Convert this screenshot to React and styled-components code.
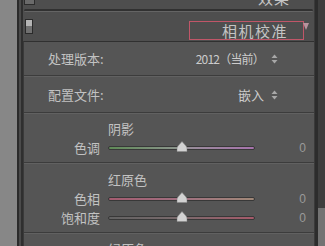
import React from "react";
import styled, { createGlobalStyle } from "styled-components";

const Global = createGlobalStyle`
  html, body { margin: 0; padding: 0; background: #545454; overflow: hidden; }
  body { font-family: "Noto Sans CJK SC", "Noto Sans", sans-serif; }
`;

const Page = styled.div`
  display: flex;
  width: 325px;
  height: 246px;
  overflow: hidden;
`;

const SideStrip = styled.div`
  width: 17px;
  flex: 0 0 17px;
  background: #878787;
`;

const Gutter = styled.div`
  width: 6px;
  flex: 0 0 6px;
  background: linear-gradient(to right, #2b2b2b 0 2px, #4b4b4b 2px 4px, #2f2f2f 4px 6px);
`;

const Column = styled.div`
  flex: 1;
  display: flex;
  flex-direction: column;
  background: #4e4e4e;
  min-width: 0;
`;

const PrevHeader = styled.div`
  height: 9px;
  flex: 0 0 9px;
  overflow: hidden;
  display: flex;
  align-items: flex-start;
  justify-content: space-between;
  padding: 0 24px 0 1px;
`;

const PrevToggle = styled.div`
  width: 9px;
  height: 14px;
  margin-top: -11px;
  border: 1px solid #2c2c2c;
  background: #6a6a6a;
`;

const PrevTitle = styled.div`
  font-size: 15px;
  line-height: 15px;
  letter-spacing: 1px;
  color: #c4c4c4;
  margin-top: -10px;
`;

const Groove = styled.div`
  height: 2px;
  flex: 0 0 2px;
  margin: 0 1px;
  border-radius: 2px;
  background: #313131;
  border-bottom: 1px solid #646464;
`;

const Header = styled.div`
  height: 29px;
  flex: 0 0 29px;
  display: flex;
  align-items: flex-start;
  justify-content: space-between;
  padding: 0 5px 0 2px;
  background: #4e4e4e;
`;

const Toggle = styled.div`
  width: 6px;
  height: 13px;
  margin-top: 7px;
  border: 1px solid #2a2a2a;
  background: linear-gradient(to bottom, #b4b4b4 0 50%, #707070 50% 100%);
`;

const TitleGroup = styled.div`
  display: flex;
  align-items: flex-start;
`;

const TitleBox = styled.div`
  width: 98px;
  height: 17px;
  margin-top: 9px;
  border: 1px solid #c05668;
  display: flex;
  align-items: center;
  justify-content: flex-end;
  padding-right: 15px;
  box-sizing: content-box;
  font-size: 15px;
  letter-spacing: 1.5px;
  color: #c4c4c4;
  line-height: 17px;
  white-space: nowrap;
`;

const Triangle = styled.div`
  width: 0;
  height: 0;
  margin-top: 11px;
  margin-left: -1px;
  border-left: 3.5px solid transparent;
  border-right: 3.5px solid transparent;
  border-top: 7px solid #b8949e;
`;

const Panel = styled.div`
  flex: 1;
  display: flex;
  flex-direction: column;
  background: #555555;
  border-top: 1px solid #303030;
  border-left: 1px solid #3a3a3a;
`;

const Section = styled.div`
  border-bottom: 1px solid #3c3c3c;
  box-shadow: 0 1px 0 #616161;
  margin-bottom: 1px;
  padding: ${(p) => p.$pad || "0"};
`;

const SelectRow = styled.div`
  height: ${(p) => p.$h}px;
  display: flex;
  align-items: center;
  justify-content: space-between;
  padding: 0 36px 0 24px;
  color: #c2c2c2;
  font-size: 13px;
`;

const Value = styled.div`
  display: flex;
  align-items: center;
  gap: 7px;
  font-size: 12px;
  letter-spacing: ${(p) => p.$ls || "0"};
  color: #cccccc;
`;

const GroupTitle = styled.div`
  height: 18px;
  line-height: 18px;
  padding-left: 84px;
  font-size: 13px;
  color: #c2c2c2;
`;

const SliderRow = styled.div`
  height: 19px;
  display: grid;
  grid-template-columns: 76px 147px 43px;
  column-gap: 8px;
  align-items: center;
`;

const SliderLabel = styled.div`
  text-align: right;
  font-size: 13px;
  color: #c2c2c2;
  line-height: 19px;
`;

const Track = styled.div`
  position: relative;
  height: 4px;
  border-radius: 2px;
  border: 1px solid #383838;
  box-sizing: border-box;
  background: ${(p) => p.$bg};
`;

const Thumb = styled.svg`
  position: absolute;
  top: -6px;
  width: 11px;
  height: 11px;
  transform: translateX(-50%);
`;

const SliderValue = styled.div`
  text-align: right;
  font-family: "Liberation Sans", Arial, sans-serif;
  font-size: 12px;
  color: #9a9a9a;
`;

const RightEdge = styled.div`
  width: 4px;
  flex: 0 0 4px;
  background: linear-gradient(to right, #3a3a3a 0 1px, #2c2c2c 1px 4px);
`;

const ScrollTrack = styled.div`
  width: 7px;
  flex: 0 0 7px;
  display: flex;
  flex-direction: column;
  background: #3e3e3e;
`;

const ScrollSpacer = styled.div`
  flex: 0 0 208px;
`;

const ScrollThumb = styled.div`
  flex: 1;
  background: #737373;
`;

const UpDown = () => (
  <svg width="7" height="10" viewBox="0 0 7 10">
    <path d="M3.5 0.5 L6.5 4 L0.5 4 Z" fill="#a8a8a8" />
    <path d="M0.5 6 L6.5 6 L3.5 9.5 Z" fill="#a8a8a8" />
  </svg>
);

const Slider = ({ label, bg, pos = 50, value = "0" }) => (
  <SliderRow>
    <SliderLabel>{label}</SliderLabel>
    <Track $bg={bg}>
      <Thumb viewBox="0 0 11 11" style={{ left: `${pos}%` }}>
        <path d="M5.5 0.5 L9.5 5 Q10.5 6.2 10.5 7.5 L10.5 10.5 L0.5 10.5 L0.5 7.5 Q0.5 6.2 1.5 5 Z" fill="#d2d2d2" stroke="#8a8a8a" strokeWidth="0.6" />
      </Thumb>
    </Track>
    <SliderValue>{value}</SliderValue>
  </SliderRow>
);

export default function App() {
  return (
    <>
      <Global />
      <Page>
        <SideStrip />
        <Gutter />
        <Column>
          <PrevHeader>
            <PrevToggle />
            <PrevTitle>效果</PrevTitle>
          </PrevHeader>
          <Groove />
          <Header>
            <Toggle />
            <TitleGroup>
              <TitleBox>相机校准</TitleBox>
              <Triangle />
            </TitleGroup>
          </Header>
          <Panel>
            <Section>
              <SelectRow $h={33}>
                <span>处理版本:</span>
                <Value $ls="-0.8px">
                  <span>2012（当前）</span>
                  <UpDown />
                </Value>
              </SelectRow>
            </Section>
            <Section>
              <SelectRow $h={35}>
                <span>配置文件:</span>
                <Value>
                  <span style={{ fontSize: 13 }}>嵌入</span>
                  <UpDown />
                </Value>
              </SelectRow>
            </Section>
            <Section $pad="6px 0 5px">
              <GroupTitle>阴影</GroupTitle>
              <Slider
                label="色调"
                bg="linear-gradient(to right, #5f8a57 0%, #8a948a 45%, #9a8a9c 60%, #a673ac 100%)"
              />
            </Section>
            <Section $pad="7px 0 5px">
              <GroupTitle>红原色</GroupTitle>
              <Slider
                label="色相"
                bg="linear-gradient(to right, #a45c70 0%, #a07080 50%, #a08878 100%)"
              />
              <Slider
                label="饱和度"
                bg="linear-gradient(to right, #626262 0%, #7a6a6c 50%, #a65a6a 100%)"
              />
            </Section>
            <Section $pad="6px 0 5px">
              <GroupTitle>绿原色</GroupTitle>
            </Section>
          </Panel>
        </Column>
        <RightEdge />
        <ScrollTrack>
          <ScrollSpacer />
          <ScrollThumb />
        </ScrollTrack>
      </Page>
    </>
  );
}
